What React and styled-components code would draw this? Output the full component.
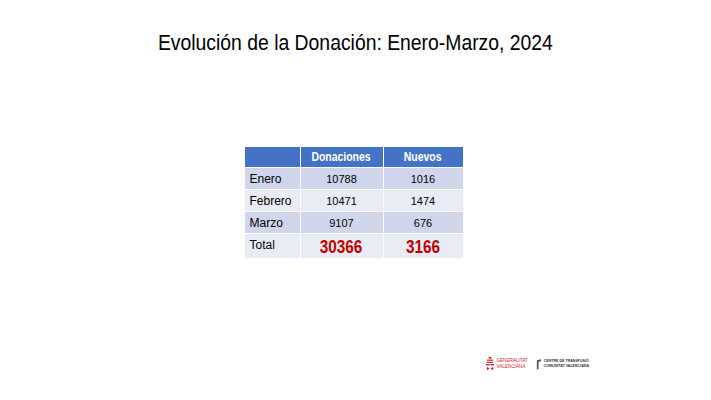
import React from 'react';
import styled, { createGlobalStyle } from 'styled-components';

const GlobalStyle = createGlobalStyle`
	html, body {
		margin: 0;
		padding: 0;
		background: #ffffff;
	}
	body {
		font-family: "Liberation Sans", Arial, sans-serif;
	}
`;

const Slide = styled.div`
	width: 711px;
	height: 400px;
	display: flex;
	flex-direction: column;
	align-items: center;
	box-sizing: border-box;
	padding-top: 28px;
	overflow: hidden;
`;

// no Arial Narrow here, so squeeze Liberation Sans
const Narrow = styled.span`
	display: inline-block;
	transform: scaleX(${p => p.$x});
	transform-origin: center;
	white-space: nowrap;
`;

const Title = styled.h1`
	margin: 0;
	font-family: "Liberation Sans", Arial, sans-serif;
	font-weight: normal;
	font-size: 22px;
	line-height: 30px;
	color: #000000;
`;

const Table = styled.table`
	margin-top: 88px;
	margin-right: 4px;
	width: 219px;
	table-layout: fixed;
	border-collapse: collapse;
	font-family: "Liberation Sans", Arial, sans-serif;
`;

const HeadCell = styled.th`
	background: #4472c4;
	color: #ffffff;
	font-weight: bold;
	font-size: 12px;
	height: 20px;
	padding: 0;
	text-align: center;
	border: 1px solid #ffffff;
`;

const Row = styled.tr`
	background: ${p => (p.$light ? '#e9ebf5' : '#cfd5ea')};
	height: ${p => p.$h}px;
`;

const Label = styled.td`
	font-size: 12px;
	color: #000000;
	padding: 0 0 0 5px;
	border: 1px solid #ffffff;
	vertical-align: ${p => (p.$top ? 'top' : 'middle')};
	padding-top: ${p => (p.$top ? '4px' : '0')};
`;

const Num = styled.td`
	font-size: 11px;
	color: #000000;
	text-align: center;
	border: 1px solid #ffffff;
	padding: 0;
`;

const Total = styled.td`
	font-size: 18px;
	font-weight: bold;
	color: #c00000;
	text-align: center;
	border: 1px solid #ffffff;
	padding: 3px 0 0;
`;

const Footer = styled.div`
	margin-top: auto;
	align-self: flex-end;
	display: flex;
	align-items: center;
	gap: 8px;
	padding: 0 122px 28px 0;
`;

const Logo = styled.div`
	display: flex;
	align-items: center;
	gap: ${p => p.$gap}px;
`;

const LogoText = styled.div`
	display: flex;
	flex-direction: column;
	font-family: "Liberation Sans", Arial, sans-serif;
	font-size: ${p => p.$size}px;
	line-height: ${p => p.$size + 1}px;
	font-weight: ${p => (p.$bold ? 'bold' : 'normal')};
	color: ${p => p.$color};
	white-space: nowrap;
`;

const rows = [
	{ mes: 'Enero', don: 10788, nue: 1016 },
	{ mes: 'Febrero', don: 10471, nue: 1474 },
	{ mes: 'Marzo', don: 9107, nue: 676 },
];

function GvaMark() {
	return (
		<svg width="8" height="16" viewBox="0 0 9 16">
			<g fill="#d3242b">
				<rect x="3" y="0" width="3" height="2" />
				<rect x="1" y="3" width="7" height="1.4" />
				<rect x="1" y="5.5" width="7" height="1.4" />
				<rect x="0" y="8" width="4" height="1.6" />
				<rect x="5" y="8" width="4" height="1.6" />
				<path d="M1 11 L4 13 L1 15 Z" />
				<path d="M8 11 L5 13 L8 15 Z" />
			</g>
		</svg>
	);
}

function CtMark() {
	return (
		<svg width="6" height="11" viewBox="0 0 7 12">
			<path d="M1 1 L6 0 L6 2 L3 3 L3 11 L1 12 Z" fill="#555" />
		</svg>
	);
}

export default function App() {
	return (
		<>
			<GlobalStyle />
			<Slide>
				<Title>
					<Narrow $x={0.88}>Evolución de la Donación: Enero-Marzo, 2024</Narrow>
				</Title>
				<Table>
					<colgroup>
						<col style={{ width: 56 }} />
						<col style={{ width: 83 }} />
						<col style={{ width: 80 }} />
					</colgroup>
					<thead>
						<tr>
							<HeadCell></HeadCell>
							<HeadCell><Narrow $x={0.87}>Donaciones</Narrow></HeadCell>
							<HeadCell><Narrow $x={0.87}>Nuevos</Narrow></HeadCell>
						</tr>
					</thead>
					<tbody>
						{rows.map((r, i) => (
							<Row key={r.mes} $light={i % 2 === 1} $h={22}>
								<Label>{r.mes}</Label>
								<Num>{r.don}</Num>
								<Num>{r.nue}</Num>
							</Row>
						))}
						<Row $light $h={25}>
							<Label $top>Total</Label>
							<Total><Narrow $x={0.85}>30366</Narrow></Total>
							<Total><Narrow $x={0.85}>3166</Narrow></Total>
						</Row>
					</tbody>
				</Table>
				<Footer>
					<Logo $gap={2}>
						<GvaMark />
						<LogoText $size={4.6} $color="#d3242b">
							<span>GENERALITAT</span>
							<span>VALENCIANA</span>
						</LogoText>
					</Logo>
					<Logo $gap={2}>
						<CtMark />
						<LogoText $size={3.6} $bold $color="#333">
							<span>CENTRE DE TRANSFUSIÓ</span>
							<span>COMUNITAT VALENCIANA</span>
						</LogoText>
					</Logo>
				</Footer>
			</Slide>
		</>
	);
}
